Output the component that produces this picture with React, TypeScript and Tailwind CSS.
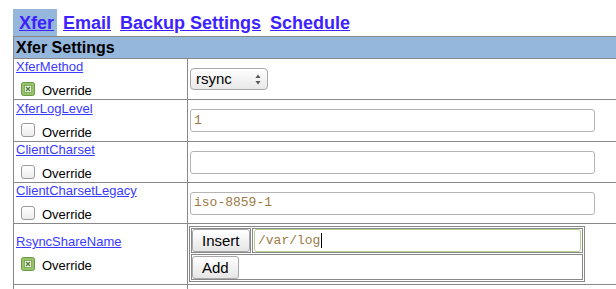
import React from "react";

const tabs = ["Xfer", "Email", "Backup Settings", "Schedule"];

function Check({ on }: { on?: boolean }) {
  if (on) {
    return (
      <svg width="14" height="14" viewBox="0 0 14 14" className="shrink-0">
        <rect x="0.5" y="0.5" width="13" height="13" rx="2" fill="#96c26b" stroke="#6b9a43" />
        <rect x="3.5" y="3.5" width="7" height="7" fill="#eef5e6" stroke="#5f8c3a" strokeWidth="0.6" />
        <path d="M5 5 L9 9 M9 5 L5 9" stroke="#4f7a2e" strokeWidth="1.2" />
      </svg>
    );
  }
  return (
    <span className="block h-[14px] w-[14px] shrink-0 rounded-[3px] border border-[#9a9a9a] bg-gradient-to-b from-white to-[#ececec]" />
  );
}

function Label({ name, on }: { name: string; on?: boolean }) {
  return (
    <div className="flex flex-col">
      <a href="#" className="leading-[16px] text-[#3a3aff] underline">
        {name}
      </a>
      <div className="mt-[3px] flex items-center pl-[5px]">
        <Check on={on} />
        <span className="ml-[7px] mt-[5px] leading-[16px] text-black">Override</span>
      </div>
    </div>
  );
}

function TextBox({ value, focus }: { value: string; focus?: boolean }) {
  return (
    <div
      className={
        "flex h-[23px] items-center rounded-[3px] border bg-white px-[3px] font-['Liberation_Mono',monospace] text-[13px] text-[#9a7a46] " +
        (focus ? "border-[#b5d08f]" : "border-[#b4b4b4]")
      }
    >
      {value}
      {focus && <span className="ml-px h-[15px] w-px bg-black" />}
    </div>
  );
}

function Btn({ children }: { children: React.ReactNode }) {
  return (
    <button className="h-[23px] rounded-[3px] border border-[#a8a8a8] bg-gradient-to-b from-white to-[#e6e6e6] px-[9px] text-[15px] leading-none text-black">
      {children}
    </button>
  );
}

export default function App() {
  return (
    <div className="w-[616px] overflow-hidden bg-white pt-[9px] font-['Liberation_Sans',Arial,sans-serif] text-[13px]">
      <div className="ml-[13px] flex h-[27px] items-start text-[18px] font-bold leading-[22px]">
        {tabs.map((t, i) => (
          <a
            key={t}
            href="#"
            className={
              "h-[27px] pl-[6px] pr-[3px] pt-[3px] text-[#3d22ff] underline " +
              (i === 0 ? "bg-[#95b7dc]" : "")
            }
          >
            {t}
          </a>
        ))}
      </div>
      <table className="ml-[13px] w-[640px] border-collapse border border-[#888]">
        <tbody>
          <tr>
            <th
              colSpan={2}
              className="h-[22px] border border-[#888] bg-[#95b7dc] pl-[2px] text-left text-[16px] leading-[20px] font-bold text-black"
            >
              Xfer Settings
            </th>
          </tr>
          <tr className="h-[40px]">
            <td className="w-[174px] border border-[#888] p-0 pl-[2px] align-middle">
              <Label name="XferMethod" on />
            </td>
            <td className="border border-[#888] p-0 pl-[2px] align-middle">
              <div className="flex h-[22px] w-[78px] items-center justify-between rounded-[4px] border border-[#a8a8a8] bg-gradient-to-b from-white to-[#e8e8e8] pl-[5px] pr-[6px] text-[15px] text-black">
                <span>rsync</span>
                <svg width="6" height="11" viewBox="0 0 6 11">
                  <path d="M3 0.5 L5.5 4 L0.5 4 Z" fill="#555" />
                  <path d="M3 10.5 L5.5 7 L0.5 7 Z" fill="#555" />
                </svg>
              </div>
            </td>
          </tr>
          <tr className="h-[42px]">
            <td className="border border-[#888] p-0 pl-[2px] align-middle">
              <Label name="XferLogLevel" />
            </td>
            <td className="border border-[#888] p-0 pl-[2px] pr-[2px] align-middle">
              <div className="w-[405px]">
                <TextBox value="1" />
              </div>
            </td>
          </tr>
          <tr className="h-[41px]">
            <td className="border border-[#888] p-0 pl-[2px] align-middle">
              <Label name="ClientCharset" />
            </td>
            <td className="border border-[#888] p-0 pl-[2px] align-middle">
              <div className="w-[405px]">
                <TextBox value="" />
              </div>
            </td>
          </tr>
          <tr className="h-[41px]">
            <td className="border border-[#888] p-0 pl-[2px] align-middle">
              <Label name="ClientCharsetLegacy" />
            </td>
            <td className="border border-[#888] p-0 pl-[2px] align-middle">
              <div className="w-[405px]">
                <TextBox value="iso-8859-1" />
              </div>
            </td>
          </tr>
          <tr className="h-[61px]">
            <td className="border border-[#888] p-0 pl-[2px] align-middle">
              <Label name="RsyncShareName" on />
            </td>
            <td className="border border-[#888] p-0 pl-[1px] align-middle">
              <table className="w-[396px] border-separate border-spacing-[1px] border border-[#888]">
                <tbody>
                  <tr>
                    <td className="w-[60px] border border-[#888] p-0">
                      <Btn>Insert</Btn>
                    </td>
                    <td className="border border-[#888] p-0 pl-[1px] pr-[1px]">
                      <TextBox value="/var/log" focus />
                    </td>
                  </tr>
                  <tr>
                    <td colSpan={2} className="border border-[#888] p-0 pt-[1px]">
                      <Btn>Add</Btn>
                    </td>
                  </tr>
                </tbody>
              </table>
            </td>
          </tr>
          <tr className="h-[30px]">
            <td className="border border-[#888] p-0 pl-[2px] align-top">
              <a href="#" className="leading-[16px] text-[#3a3aff] underline">
                RsyncCsumCacheVerifyProb
              </a>
            </td>
            <td className="border border-[#888] p-0" />
          </tr>
        </tbody>
      </table>
    </div>
  );
}
